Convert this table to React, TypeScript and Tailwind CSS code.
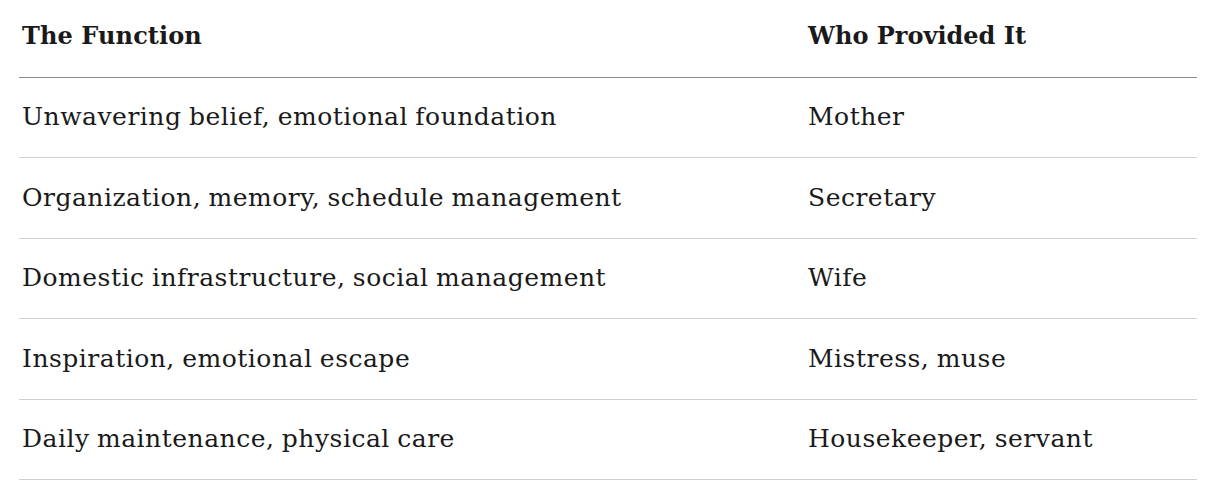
import React from "react";

const rows: [string, string][] = [
  ["Unwavering belief, emotional foundation", "Mother"],
  ["Organization, memory, schedule management", "Secretary"],
  ["Domestic infrastructure, social management", "Wife"],
  ["Inspiration, emotional escape", "Mistress, muse"],
  ["Daily maintenance, physical care", "Housekeeper, servant"],
];

export default function App() {
  return (
    <div
      className="w-[1214px] h-[502px] bg-white pl-[19px] pr-[17px] text-[#1a1a1a]"
      style={{ fontFamily: '"DejaVu Serif", serif' }}
    >
      <table className="w-full border-collapse">
        <thead>
          <tr className="border-b border-[#8c8c8c] h-[77px]">
            <th className="w-[786px] pl-[3px] text-left align-middle text-[24px] font-bold pb-[4px] tracking-[0.1px]">The Function</th>
            <th className="pl-[3px] text-left align-middle text-[24px] font-bold pb-[4px]">Who Provided It</th>
          </tr>
        </thead>
        <tbody>
          {rows.map(([a, b]) => (
            <tr key={a} className="border-b border-[#cfcfcf] h-[80.5px]">
              <td className="pl-[3px] align-middle text-[25px] tracking-[0.5px] [word-spacing:-1px] leading-[30px]">{a}</td>
              <td className="pl-[3px] align-middle text-[25px] tracking-[0.5px] [word-spacing:-1px] leading-[30px]">{b}</td>
            </tr>
          ))}
        </tbody>
      </table>
    </div>
  );
}
